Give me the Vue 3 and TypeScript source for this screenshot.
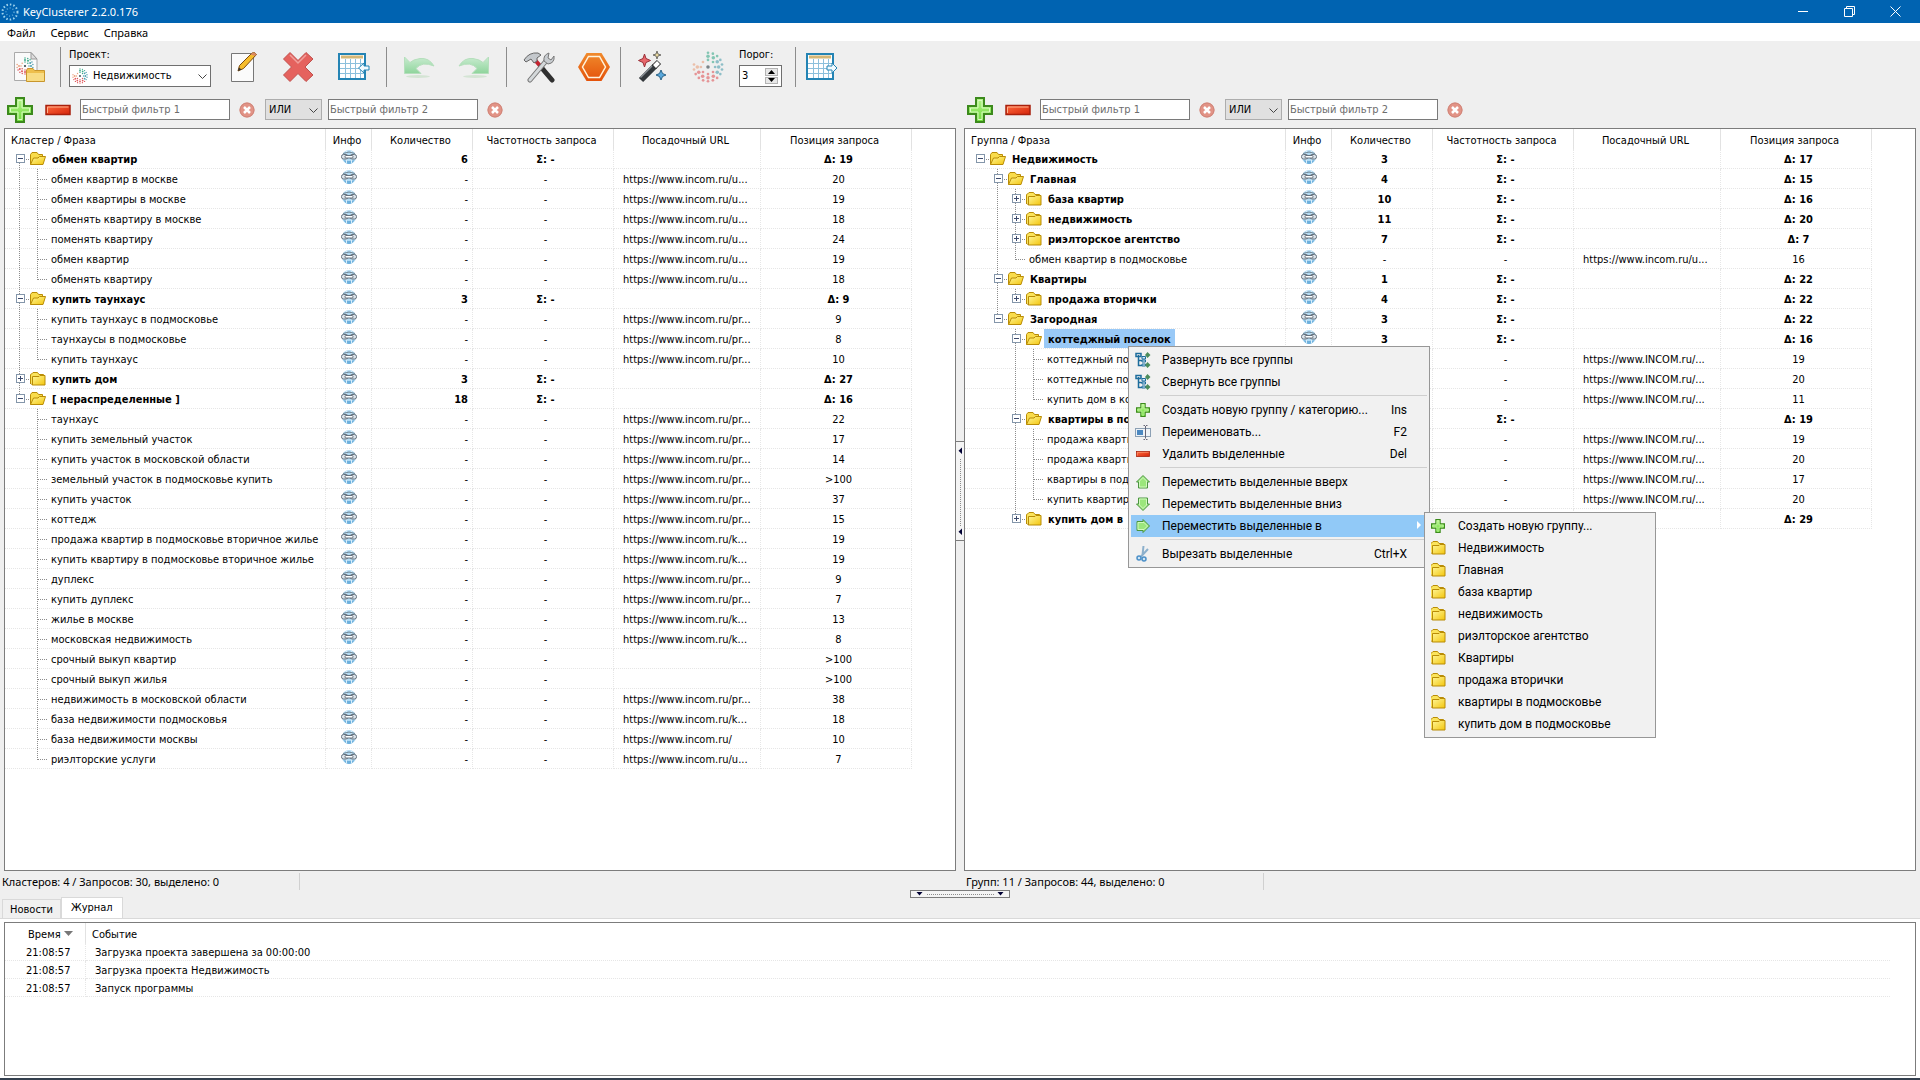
<script setup lang="ts">
import { ref } from 'vue'

interface Node {
  name: string
  count?: number
  url?: string
  pos: string
  open?: boolean
  selected?: boolean
  children?: Node[]
}

interface Row {
  node: Node
  folder: boolean
  guides: string[]
}

const U = 'https://www.incom.ru/u...'
const PR = 'https://www.incom.ru/pr...'
const K = 'https://www.incom.ru/k...'
const INC = 'https://www.INCOM.ru/...'

const leaf = (name: string, pos: string, url = ''): Node => ({ name, pos, url })
const group = (name: string, count: number, avg: number, children: Node[] | null, selected = false): Node => ({
  name, count, pos: 'Δ: ' + avg, open: children !== null, children: children ?? [], selected,
})

const clusters: Node[] = [
  group('обмен квартир', 6, 19, [
    leaf('обмен квартир в москве', '20', U),
    leaf('обмен квартиры в москве', '19', U),
    leaf('обменять квартиру в москве', '18', U),
    leaf('поменять квартиру', '24', U),
    leaf('обмен квартир', '19', U),
    leaf('обменять квартиру', '18', U),
  ]),
  group('купить таунхаус', 3, 9, [
    leaf('купить таунхаус в подмосковье', '9', PR),
    leaf('таунхаусы в подмосковье', '8', PR),
    leaf('купить таунхаус', '10', PR),
  ]),
  group('купить дом', 3, 27, null),
  group('[ нераспределенные ]', 18, 16, [
    leaf('таунхаус', '22', PR),
    leaf('купить земельный участок', '17', PR),
    leaf('купить участок в московской области', '14', PR),
    leaf('земельный участок в подмосковье купить', '>100', PR),
    leaf('купить участок', '37', PR),
    leaf('коттедж', '15', PR),
    leaf('продажа квартир в подмосковье вторичное жилье', '19', K),
    leaf('купить квартиру в подмосковье вторичное жилье', '19', K),
    leaf('дуплекс', '9', PR),
    leaf('купить дуплекс', '7', PR),
    leaf('жилье в москве', '13', K),
    leaf('московская недвижимость', '8', K),
    leaf('срочный выкуп квартир', '>100'),
    leaf('срочный выкуп жилья', '>100'),
    leaf('недвижимость в московской области', '38', PR),
    leaf('база недвижимости подмосковья', '18', K),
    leaf('база недвижимости москвы', '10', 'https://www.incom.ru/'),
    leaf('риэлторские услуги', '7', U),
  ]),
]

const groups: Node[] = [
  group('Недвижимость', 3, 17, [
    group('Главная', 4, 15, [
      group('база квартир', 10, 16, null),
      group('недвижимость', 11, 20, null),
      group('риэлторское агентство', 7, 7, null),
      leaf('обмен квартир в подмосковье', '16', U),
    ]),
    group('Квартиры', 1, 22, [group('продажа вторички', 4, 22, null)]),
    group('Загородная', 3, 22, [
      group('коттеджный поселок', 3, 16, [
        leaf('коттеджный по', '19', INC),
        leaf('коттеджные по', '20', INC),
        leaf('купить дом в ко', '11', INC),
      ], true),
      group('квартиры в по', 4, 19, [
        leaf('продажа кварти', '19', INC),
        leaf('продажа кварти', '20', INC),
        leaf('квартиры в под', '17', INC),
        leaf('купить квартир', '20', INC),
      ]),
      group('купить дом в', 3, 29, null),
    ]),
  ]),
]

// Line segments drawn in one 18px guide cell, keyed by its kind.
const segments: Record<string, string> = {
  pass: 'M8.5 0V20',
  tee: 'M8.5 0V20M9 10.5H19',
  end: 'M8.5 0V11M9 10.5H19',
  start: 'M8.5 10V20M9 10.5H19',
  only: 'M9 10.5H19',
  none: '',
}

function flatten(nodes: Node[], above: string[] = []): Row[] {
  const rows: Row[] = []
  nodes.forEach((node, i) => {
    const last = i === nodes.length - 1
    const root = above.length === 0 && i === 0
    const own = root ? (last ? 'only' : 'start') : last ? 'end' : 'tee'
    rows.push({ node, folder: node.children !== undefined, guides: [...above, own] })
    if (node.open) rows.push(...flatten(node.children ?? [], [...above, last ? 'none' : 'pass']))
  })
  return rows
}

const panels = [
  { id: 'clusters', title: 'Кластер / Фраза', rows: flatten(clusters), status: 'Кластеров: 4 / Запросов: 30, выделено: 0' },
  { id: 'groups', title: 'Группа / Фраза', rows: flatten(groups), status: 'Групп: 11 / Запросов: 44, выделено: 0' },
]

const menu = [
  [
    { icon: 'tree', text: 'Развернуть все группы', key: '' },
    { icon: 'tree', text: 'Свернуть все группы', key: '' },
  ],
  [
    { icon: 'plus', text: 'Создать новую группу / категорию...', key: 'Ins' },
    { icon: 'rename', text: 'Переименовать...', key: 'F2' },
    { icon: 'minus', text: 'Удалить выделенные', key: 'Del' },
  ],
  [
    { icon: 'up', text: 'Переместить выделенные вверх', key: '' },
    { icon: 'down', text: 'Переместить выделенные вниз', key: '' },
    { icon: 'right', text: 'Переместить выделенные в', key: '', sub: true },
  ],
  [{ icon: 'cut', text: 'Вырезать выделенные', key: 'Ctrl+X' }],
]

const targets = [
  'Недвижимость', 'Главная', 'база квартир', 'недвижимость', 'риэлторское агентство',
  'Квартиры', 'продажа вторички', 'квартиры в подмосковье', 'купить дом в подмосковье',
]

const log = [
  { time: '21:08:57', text: 'Загрузка проекта завершена за 00:00:00' },
  { time: '21:08:57', text: 'Загрузка проекта Недвижимость' },
  { time: '21:08:57', text: 'Запуск программы' },
]

const dots: { x: number; y: number; r: number; c: string }[] = [{ x: 16, y: 16, r: 2, c: '#2b3a42' }]
for (const [radius, n] of [[8, 8], [12, 12], [16, 18]]) {
  for (let i = 0; i < n; i++) {
    const a = (i / n) * 360
    if (radius > 8 && a > 285 && a < 345) continue
    const c = a < 60 || a > 340 ? '#3dab8c' : a < 130 ? '#4d9fae' : a < 250 ? '#e0595c' : '#e9a07c'
    const t = (a * Math.PI) / 180
    dots.push({ x: 16 + radius * Math.sin(t), y: 16 - radius * Math.cos(t), r: radius === 12 ? 2 : 1.5, c })
  }
}

const threshold = ref(3)
const tab = ref('log')
</script>

<template>
  <div class="app">
    <svg class="defs" aria-hidden="true">
      <defs>
        <linearGradient id="gYellow" x1="0" y1="0" x2="1" y2="1"><stop offset="0" stop-color="#fff79a" /><stop offset="1" stop-color="#f3c50c" /></linearGradient>
        <linearGradient id="gGreen" x1="0" y1="0" x2="0" y2="1"><stop offset="0" stop-color="#b5f58a" /><stop offset="1" stop-color="#6fdc3c" /></linearGradient>
        <linearGradient id="gRed" x1="0" y1="0" x2="1" y2="1"><stop offset="0" stop-color="#ff6a3c" /><stop offset="1" stop-color="#d4240a" /></linearGradient>
        <linearGradient id="gOrange" x1="0" y1="0" x2="0" y2="1"><stop offset="0" stop-color="#f08a2c" /><stop offset="1" stop-color="#e4520a" /></linearGradient>
        <linearGradient id="gUndo" x1="0" y1="0" x2="0" y2="1"><stop offset="0" stop-color="#c9ecd0" /><stop offset="1" stop-color="#8fd49c" /></linearGradient>
        <symbol id="dots" viewBox="-2 -2 36 36">
          <circle v-for="(d, i) in dots" :key="i" :cx="d.x" :cy="d.y" :r="d.r" :fill="d.c" />
        </symbol>
        <symbol id="folder" viewBox="0 0 16 16">
          <path d="M.5 13V4Q.5 3 1.5 3L3 1.5H7.5L9 3.5H13.5V5" fill="#fbe45c" stroke="#b98c06" />
          <path d="M.5 4V12.500L3 14" fill="none" stroke="#b98c06" />
          <path d="M2.500 5.500L9 5.500L10 4.500H15V14H2.500Z" fill="url(#gYellow)" stroke="#b98c06" />
        </symbol>
        <symbol id="folder-open" viewBox="0 0 16 16">
          <path d="M.5 13.500V3.500L2 1.500H7L8.500 3.500H12.500V6" fill="#f9dc4c" stroke="#b98c06" />
          <path d="M.5 13.500L3.500 7H8L9.500 5.500H15.500L13 13.500Z" fill="url(#gYellow)" stroke="#b98c06" />
        </symbol>
        <symbol id="link" viewBox="0 0 16 16">
          <circle cx="8" cy="8" r="7" fill="#b4dcf4" />
          <path d="M2.500 11Q8 13 13.500 11Q11.500 15 8 15Q4.500 15 2.500 11Z" fill="#6fb0dc" />
          <path d="M5.500 1.500V14.500M10.500 1.500V14.500" stroke="#d8eefa" />
          <path d="M2 4.500Q8 1.500 14 4.500" fill="none" stroke="#6f8494" />
          <rect x=".5" y="5.500" width="6.500" height="4.500" rx="2" fill="#dce4ea" stroke="#66727e" />
          <rect x="9" y="5.500" width="6.500" height="4.500" rx="2" fill="#dce4ea" stroke="#66727e" />
          <rect x="4" y="6.500" width="8" height="2.500" rx="1" fill="#fff" stroke="#66727e" />
        </symbol>
        <symbol id="plus" viewBox="0 0 26 26">
          <path d="M9 1H17V9H25V17H17V25H9V17H1V9H9Z" fill="url(#gGreen)" stroke="#3c8a1c" stroke-width="2" />
          <path d="M11 3.500H15V11H22.500V15H15V22.500H11V15H3.500V11H11Z" fill="none" stroke="#d8fbc0" />
        </symbol>
        <symbol id="minus" viewBox="0 0 26 26">
          <rect x="1" y="8.500" width="24" height="9" fill="url(#gRed)" stroke="#a8200c" stroke-width="1.500" />
          <path d="M2.500 16V10H23.500" fill="none" stroke="#ffb08c" />
        </symbol>
        <symbol id="clear" viewBox="0 0 16 16">
          <circle cx="8" cy="8" r="7.500" fill="#e29386" />
          <circle cx="8" cy="8" r="7" fill="none" stroke="#cf8579" />
          <path d="M5 5L11 11M11 5L5 11" stroke="#fff" stroke-width="2.500" />
        </symbol>
        <symbol id="up" viewBox="0 0 16 16">
          <path d="M8 1.500L14.500 8H12.500V14H3.500V8H1.500Z" fill="#9be67c" stroke="#4b9440" />
          <path d="M8 3.500L11.500 7V13H4.500V7Z" fill="none" stroke="#d2f8bf" />
        </symbol>
        <symbol id="sheet" viewBox="0 0 32 32">
          <rect x="1" y="3" width="26" height="25" fill="#fff" stroke="#2484b4" stroke-width="2" />
          <rect x="3" y="4.500" width="22" height="3" fill="#d4b878" />
          <path d="M2 12.500H26M2 17.500H26M2 22.500H26M7.500 8V27M12.500 8V27M17.500 8V27M22.500 8V27" stroke="#8cc0dc" />
        </symbol>
      </defs>
    </svg>

    <header class="title-bar">
      <svg class="app-icon" viewBox="0 0 18 18">
        <circle cx="9" cy="9" r="7.500" fill="none" stroke="#9fd4ee" stroke-width="2" stroke-dasharray="1.500 2" />
        <circle cx="9" cy="9" r="4" fill="none" stroke="#5aa6d8" stroke-width="1.500" stroke-dasharray="1 2" />
      </svg>
      <h1>KeyClusterer 2.2.0.176</h1>
      <div class="win-buttons">
        <button type="button" aria-label="Свернуть"><svg viewBox="0 0 11 11"><path d="M0 5.500H10" /></svg></button>
        <button type="button" aria-label="Восстановить"><svg viewBox="0 0 11 11"><path d="M.5 2.500H8.500V10.500H.5ZM2.500 2.500V.5H10.500V8.500H8.500" /></svg></button>
        <button type="button" aria-label="Закрыть"><svg viewBox="0 0 11 11"><path d="M.5 .5L10.500 10.500M10.500 .5L.5 10.500" /></svg></button>
      </div>
    </header>

    <nav class="menu-bar">
      <button type="button">Файл</button>
      <button type="button">Сервис</button>
      <button type="button">Справка</button>
    </nav>

    <div class="toolbar">
      <button class="tool" type="button" aria-label="Открыть проект">
        <svg viewBox="0 0 32 32">
          <path d="M.5 1.500H17L23 8V29.500H.5Z" fill="#fafafa" stroke="#aaa" /><path d="M17 1.500V8H23Z" fill="#ddd" stroke="#999" />
          <use href="#dots" x="2" y="6" width="18" height="18" />
          <path d="M12.500 30.500V19L14 17.500H19L20.500 19.500H30.500V30.500Z" fill="#eebf4c" stroke="#c8962c" /><path d="M13 22H30V30H13Z" fill="#f8dc84" />
        </svg>
      </button>
      <i class="sep first"></i>
      <div class="field">
        <label for="project">Проект:</label>
        <div class="combo">
          <svg class="combo-icon" viewBox="0 0 16 16"><use href="#dots" width="16" height="16" /></svg>
          <select id="project"><option>Недвижимость</option></select>
          <svg class="chevron" viewBox="0 0 9 6"><path d="M.5 .5L4.500 4.500L8.500 .5" /></svg>
        </div>
      </div>
      <div class="tools after-field">
        <button class="tool" type="button" aria-label="Редактировать">
          <svg viewBox="0 0 32 32">
            <path d="M3.500 2.500H25.500V30.500H3.500Z" fill="#fbfbfb" stroke="#777" />
            <path d="M10 20L11.500 14.500L24 2Q27 .5 28.500 3.500L15.500 17.500Z" fill="#f7bd2c" stroke="#7a4a10" />
            <path d="M24 2Q27 .5 28.500 3.500L27 5L22.500 3.500Z" fill="#d88860" /><path d="M10 20L11 16.500L13.500 18.500Z" fill="#333" />
          </svg>
        </button>
        <button class="tool" type="button" aria-label="Удалить">
          <svg viewBox="0 0 32 32"><path d="M7 1.500L15 9.500L23 1.500L30 8L22 16L30 24L23 30.500L15 22.500L7 30.500L.5 24L8.500 16L.5 8Z" fill="#e5625e" stroke="#c0504c" /><path d="M7 4L15 12L23 4" fill="none" stroke="#f0a09c" stroke-width="1.500" /></svg>
        </button>
        <button class="tool" type="button" aria-label="Импорт">
          <svg viewBox="0 0 32 32"><use href="#sheet" width="32" height="32" /><path d="M20.500 17L26 12V15H31V19H26V22Z" fill="#f2fbff" stroke="#2484b4" /></svg>
        </button>
      </div>
      <i class="sep"></i>
      <div class="tools">
        <button class="tool" type="button" aria-label="Отменить">
          <svg viewBox="0 0 32 32"><path d="M1.500 6V22.500H18L13 17.500Q19 10 31 15Q26 6.500 17 7.500Q10 8.500 7 11.500Z" fill="url(#gUndo)" stroke="#b5dfbc" /><ellipse cx="15" cy="25.500" rx="12" ry="1.500" fill="#d4e4d4" /></svg>
        </button>
        <button class="tool" type="button" aria-label="Повторить">
          <svg viewBox="0 0 32 32"><g transform="matrix(-1 0 0 1 32 0)"><path d="M1.500 6V22.500H18L13 17.500Q19 10 31 15Q26 6.500 17 7.500Q10 8.500 7 11.500Z" fill="url(#gUndo)" stroke="#b5dfbc" /></g><ellipse cx="17" cy="25.500" rx="12" ry="1.500" fill="#d4e4d4" /></svg>
        </button>
      </div>
      <i class="sep"></i>
      <div class="tools">
        <button class="tool" type="button" aria-label="Настройки">
          <svg viewBox="0 0 32 32">
            <path d="M12 9L19 17" stroke="#c42430" stroke-width="4" /><path d="M18 16L29 29" stroke="#303030" stroke-width="5" stroke-linecap="round" />
            <path d="M1 9Q6 1 15 2L18 4L14 7L14 10L11 12L8 8L3 11Z" fill="#c4c8cc" stroke="#666" />
            <path d="M7 29L23 10" stroke="#777" stroke-width="5" stroke-linecap="round" /><path d="M7 29L23 10" stroke="#d4d8da" stroke-width="3" stroke-linecap="round" />
            <path d="M21 10Q20 4 26 2L25 7L28 9L31 5Q32 12 25 13Z" fill="#c8ccd0" stroke="#777" />
          </svg>
        </button>
        <button class="tool" type="button" aria-label="Остановить">
          <svg viewBox="0 0 32 32"><path d="M8.500 2H23.500L32 16L23.500 30H8.500L0 16Z" fill="url(#gOrange)" /><path d="M10.500 5.500H21.500L27.500 16L21.500 26.500H10.500L4.500 16Z" fill="none" stroke="#fff3dc" stroke-width="1.500" /></svg>
        </button>
      </div>
      <i class="sep tight"></i>
      <div class="tools">
        <button class="tool" type="button" aria-label="Мастер">
          <svg viewBox="0 0 32 32">
            <path d="M4 29L18 15" stroke="#33383c" stroke-width="6" /><path d="M3.500 26.500L15 15" stroke="#8a9096" stroke-width="1.500" /><path d="M17 16L22 11" stroke="#333" stroke-width="6" /><path d="M17.500 15.500L21.500 11.500" stroke="#fff" stroke-width="4" />
            <path d="M7.500 3L9 7.500L13.500 9.500L9 11.500L7.500 16L6 11.500L1.500 9.500L6 7.500Z" fill="#e8686c" stroke="#9a3038" />
            <path d="M20 0L21 3L24 4L21 5L20 8L19 5L16 4L19 3Z" fill="#e8d8a0" stroke="#444" stroke-width=".7" />
            <path d="M24 19L25.500 22.500L29 24L25.500 25.500L24 29L22.500 25.500L19 24L22.500 22.500Z" fill="#5aa8dc" stroke="#2c6488" />
          </svg>
        </button>
        <button class="tool faded" type="button" aria-label="Кластеризация"><svg viewBox="0 0 32 32"><use href="#dots" width="32" height="32" /></svg></button>
      </div>
      <div class="field threshold">
        <label for="threshold">Порог:</label>
        <div class="spin">
          <input id="threshold" v-model="threshold" type="number">
          <div class="spin-buttons">
            <button type="button" aria-label="Больше" @click="threshold++"><svg viewBox="0 0 7 4"><path d="M0 4L3.500 0L7 4Z" /></svg></button>
            <button type="button" aria-label="Меньше" @click="threshold--"><svg viewBox="0 0 7 4"><path d="M0 0L3.500 4L7 0Z" /></svg></button>
          </div>
        </div>
      </div>
      <i class="sep end"></i>
      <button class="tool" type="button" aria-label="Экспорт">
        <svg viewBox="0 0 32 32"><use href="#sheet" width="32" height="32" /><path d="M21 15H26V12L31 17L26 22V19H21Z" fill="#f2fbff" stroke="#2484b4" /></svg>
      </button>
    </div>

    <main class="workspace">
      <section v-for="p in panels" :key="p.id" class="side">
        <div class="filters">
          <button type="button" class="flt-icon" aria-label="Добавить"><svg><use href="#plus" /></svg></button>
          <button type="button" class="flt-icon remove" aria-label="Удалить"><svg><use href="#minus" /></svg></button>
          <input type="text" placeholder="Быстрый фильтр 1" aria-label="Быстрый фильтр 1">
          <button type="button" class="clear" aria-label="Очистить фильтр 1"><svg><use href="#clear" /></svg></button>
          <div class="combo op">
            <select aria-label="Условие"><option>ИЛИ</option></select>
            <svg class="chevron" viewBox="0 0 9 6"><path d="M.5 .5L4.500 4.500L8.500 .5" /></svg>
          </div>
          <input type="text" placeholder="Быстрый фильтр 2" aria-label="Быстрый фильтр 2">
          <button type="button" class="clear" aria-label="Очистить фильтр 2"><svg><use href="#clear" /></svg></button>
        </div>

        <div class="pane">
          <table class="tree" :class="p.id">
            <colgroup><col class="c-name"><col class="c-info"><col class="c-count"><col class="c-freq"><col class="c-url"><col class="c-pos"></colgroup>
            <thead>
              <tr><th class="name">{{ p.title }}</th><th>Инфо</th><th>Количество</th><th>Частотность запроса</th><th>Посадочный URL</th><th>Позиция запроса</th></tr>
            </thead>
            <tbody>
              <tr v-for="(r, i) in p.rows" :key="i" :class="{ group: r.folder }">
                <td class="name">
                  <div class="line">
                    <svg v-for="(g, j) in r.guides" :key="j" class="guide" viewBox="0 0 18 19">
                      <path class="dotted" :d="segments[g]" />
                      <template v-if="r.folder && j === r.guides.length - 1">
                        <rect x="5.500" y="5.500" width="8" height="8" fill="#fff" stroke="#8496aa" />
                        <path :d="r.node.open ? 'M7 9.500H12' : 'M7 9.500H12M9.500 7V12'" stroke="#3c4a6c" />
                      </template>
                    </svg>
                    <svg v-if="r.folder" class="folder"><use :href="r.node.open ? '#folder-open' : '#folder'" /></svg>
                    <span :class="{ selected: r.node.selected }">{{ r.node.name }}</span>
                  </div>
                </td>
                <td class="info"><svg><use href="#link" /></svg></td>
                <td class="count">{{ r.folder ? r.node.count : '-' }}</td>
                <td>{{ r.folder ? 'Σ: -' : '-' }}</td>
                <td class="url">{{ r.node.url }}</td>
                <td>{{ r.node.pos }}</td>
              </tr>
            </tbody>
          </table>

          <template v-if="p.id === 'groups'">
            <div class="popup context" role="menu">
              <div v-for="(part, i) in menu" :key="i" class="part">
                <button v-for="m in part" :key="m.text" type="button" role="menuitem" :class="{ active: 'sub' in m }">
                  <svg v-if="m.icon === 'plus' || m.icon === 'minus'" viewBox="0 0 16 16"><use :href="'#' + m.icon" x="1" y="1" width="14" height="14" /></svg>
                  <svg v-else-if="m.icon === 'up'" viewBox="0 0 16 16"><use href="#up" /></svg>
                  <svg v-else-if="m.icon === 'down'" viewBox="0 0 16 16"><use href="#up" transform="rotate(180 8 8)" /></svg>
                  <svg v-else-if="m.icon === 'right'" viewBox="0 0 16 16"><use href="#up" transform="rotate(90 8 8)" /></svg>
                  <svg v-else-if="m.icon === 'tree'" viewBox="0 0 16 16">
                    <path d="M3.500 3V13.500H7M3.500 8.500H7M1 1.500H6V4.500H1Z" fill="none" stroke="#1c6c9c" stroke-width="1.500" /><path d="M7 4.500H10.500V7H7ZM7 8H10.500V10H7ZM7 12H10.500V14H7Z" fill="#cfe8f8" stroke="#1c6c9c" />
                    <path d="M12.500 0L15.500 3L12.500 6L10 3ZM12.500 10L15.500 13L12.500 16L10 13Z" fill="#4c8c5c" />
                  </svg>
                  <svg v-else-if="m.icon === 'rename'" viewBox="0 0 16 16">
                    <rect x=".5" y="4.500" width="15" height="8" fill="#eef2f6" stroke="#8ca0b4" /><rect x="2" y="6" width="6" height="5" fill="#4c88c0" /><path d="M10.500 2V14.500M8.500 1.500H10M11 1.500H12.500M8.500 15.500H10M11 15.500H12.500" stroke="#667" />
                  </svg>
                  <svg v-else viewBox="0 0 16 16">
                    <path d="M8.500 0L7.500 9M13 3L6 10.500" stroke="#8cb0cc" stroke-width="2" /><circle cx="4" cy="12" r="2" fill="#cfe4f4" stroke="#4c90c8" stroke-width="1.500" /><circle cx="9" cy="13" r="2" fill="#cfe4f4" stroke="#4c90c8" stroke-width="1.500" />
                  </svg>
                  <span>{{ m.text }}</span>
                  <kbd v-if="m.key">{{ m.key }}</kbd>
                  <svg v-if="'sub' in m" class="arrow" viewBox="0 0 4 8"><path d="M0 0L4 4L0 8Z" fill="#fff" /></svg>
                </button>
              </div>
            </div>
            <div class="popup submenu" role="menu">
              <button type="button" role="menuitem"><svg viewBox="0 0 16 16"><use href="#plus" x="0" y="1" width="14" height="14" /></svg><span>Создать новую группу...</span></button>
              <button v-for="t in targets" :key="t" type="button" role="menuitem"><svg viewBox="1 0 16 16"><use href="#folder" width="16" height="16" /></svg><span>{{ t }}</span></button>
            </div>
          </template>
        </div>
        <footer class="status"><span>{{ p.status }}</span></footer>
      </section>
      <div class="grip vertical">
        <svg viewBox="0 0 8 98"><path d="M6 5.500V12L2.500 8.800ZM6 86.500V93L2.500 89.800Z" fill="#003" /><path class="dotted" d="M4.500 17V84" /></svg>
      </div>
      <div class="grip horizontal">
        <svg viewBox="0 0 98 6"><path d="M5.500 1H11.500L8.500 4.500ZM86.500 1H92.500L89.500 4.500Z" fill="#003" /><path class="dotted" d="M16 3.500H84" /></svg>
      </div>
    </main>

    <section class="journal">
      <div class="tabs" role="tablist">
        <button type="button" role="tab" :class="{ current: tab === 'news' }" @click="tab = 'news'">Новости</button>
        <button type="button" role="tab" :class="{ current: tab === 'log' }" @click="tab = 'log'">Журнал</button>
      </div>
      <div class="sheet">
        <div class="log-box">
          <table class="log">
            <colgroup><col class="c-time"><col></colgroup>
            <thead><tr><th class="time">Время <svg viewBox="0 0 9 5"><path d="M0 0H9L4.500 5Z" fill="#777" /></svg></th><th>Событие</th></tr></thead>
            <tbody><tr v-for="(l, i) in log" :key="i"><td>{{ l.time }}</td><td>{{ l.text }}</td></tr></tbody>
          </table>
        </div>
      </div>
    </section>
  </div>
</template>

<style>
body {
  margin: 0;
  background: #efefef;
}
</style>

<style scoped>
.app {
  --ui: 'Noto Sans', 'Open Sans', sans-serif;
  --grid: 'DejaVu Sans Condensed', 'DejaVu Sans', sans-serif;
  display: flex;
  flex-direction: column;
  min-height: 100vh;
  box-sizing: border-box;
  border-bottom: 2px solid #34404e;
  background: #efefef;
  color: #000;
  font: 11px/16px var(--grid);
}
.app *, .app *::before { box-sizing: border-box; }
.defs { position: absolute; width: 0; height: 0; }
button, input, select { margin: 0; padding: 0; border: 0; background: none; color: inherit; font: inherit; }
svg { display: block; flex: none; }
.dotted { fill: none; stroke: #8c8c8c; stroke-dasharray: 1 1; }

.title-bar { display: flex; align-items: center; height: 23px; padding-left: 1px; background: #0063b1; color: #fff; }
.app-icon { width: 18px; height: 18px; margin-right: 4px; }
h1 { margin: 0; font: 11px/16px var(--ui); }
.win-buttons { display: flex; margin-left: auto; padding-right: 2px; }
.win-buttons button { display: grid; place-items: center; width: 46px; height: 21px; }
.win-buttons svg { width: 11px; height: 11px; fill: none; stroke: #fff; }

.menu-bar { display: flex; gap: 15px; height: 18px; padding: 2px 7px 0; background: #fff; font: 11px/16px var(--ui); }

.toolbar { display: flex; align-items: center; height: 51px; padding-left: 14px; }
.tool { width: 32px; height: 32px; }
.tool svg { width: 32px; height: 32px; }
.faded { opacity: .6; }
.tools { display: flex; gap: 23px; }
.after-field { margin-left: 17px; }
.sep { width: 1px; height: 40px; margin: 0 16px; background: #8c8c8c; }
.sep.first { margin: 0 8px 0 14px; }
.sep.tight { margin-left: 10px; }
.sep.end { margin: 0 10px 0 13px; }
.field { display: flex; flex-direction: column; gap: 2px; padding-top: 1px; }
.field label { line-height: 16px; }
.threshold { margin-left: 15px; }
.combo { position: relative; }
.combo select { appearance: none; width: 142px; height: 22px; padding-left: 23px; border: 1px solid #6f6f6f; background: #fff; }
.combo-icon { position: absolute; left: 3px; top: 3px; width: 16px; height: 16px; }
.chevron { position: absolute; right: 4px; top: 9px; width: 9px; height: 6px; fill: none; stroke: #444; pointer-events: none; }
.spin { display: flex; width: 43px; height: 22px; border: 1px solid #6f6f6f; background: #fff; }
.spin input { flex: 1; min-width: 0; padding-left: 2px; appearance: textfield; }
.spin input::-webkit-inner-spin-button { appearance: none; margin: 0; }
.spin-buttons { display: flex; flex-direction: column; gap: 1px; padding: 2px 3px; }
.spin-buttons button { display: grid; place-items: center; width: 13px; flex: 1; border: 1px solid #b4b4b4; background: #e8e8e8; }
.spin-buttons svg { width: 7px; height: 4px; }

.workspace { position: relative; display: flex; flex: 1; }
.side { display: flex; flex-direction: column; flex: 1; min-width: 0; }
.filters { display: flex; align-items: center; height: 36px; padding: 0 0 1px 7px; }
.flt-icon, .flt-icon svg { width: 26px; height: 26px; }
.remove { margin: 0 9px 0 12px; }
.filters input { width: 150px; height: 21px; padding-left: 1px; border: 1px solid #7a7a7a; background: #fff; }
.filters input::placeholder { color: #6d6d6d; opacity: 1; }
.clear, .clear svg { width: 16px; height: 16px; }
.clear { margin: 0 9px; }
.op { margin: 0 6px 0 1px; }
.combo.op select { width: 57px; height: 21px; padding-left: 3px; border-color: #adadad; background: #e0e0e0; }

.pane { position: relative; flex: 1; margin: 0 4px; border: 1px solid #7c7c7c; background: #fff; }
.tree, .log { table-layout: fixed; border-spacing: 0; }
.tree { width: 907px; }
.c-name { width: 321px; }
.c-info { width: 46px; }
.c-count { width: 101px; }
.c-freq { width: 141px; }
.c-url { width: 147px; }
.c-pos { width: 151px; }
th { height: 20px; padding: 4px 3px 0 0; border-right: 1px solid #e2e2e2; font-weight: 400; line-height: 16px; white-space: nowrap; }
.tree th.name { padding-left: 6px; text-align: left; }
.tree td { height: 20px; padding: 2px 0 0 5px; border-right: 1px dotted #e6e6e6; border-bottom: 1px dotted #e6e6e6; text-align: center; white-space: nowrap; }
.tree td.name { padding: 0 0 0 6px; text-align: left; }
.tree td.url { padding-left: 9px; text-align: left; }
.tree td.info { padding: 0; }
.info svg { width: 16px; height: 16px; margin: 0 auto 3px; }
.clusters td.count { padding-right: 4px; text-align: right; }
.group { font-weight: 700; }
.line { display: flex; align-items: center; height: 19px; }
.guide { width: 18px; height: 19px; overflow: visible; }
.folder { width: 16px; height: 16px; margin: 0 1px; }
.line span { height: 19px; margin-left: 1px; padding: 0 4px; line-height: 21px; }
.guide + span { margin-left: 0; }
.selected { background: #99c9f7; }

.status { display: flex; height: 19px; padding: 2px 0 0 2px; font: 11px/18px var(--ui); }
.status span { width: 298px; border-right: 1px solid #d0d0d0; }
.side + .side .status { padding-left: 6px; }

.grip { position: absolute; border: 1px solid #7c7c7c; background: #f4f4f4; }
.grip.vertical { left: calc(50% - 5px); top: 349px; width: 10px; height: 100px; }
.grip.vertical svg { width: 8px; height: 98px; }
.grip.horizontal { left: calc(50% - 50px); bottom: -8px; width: 100px; height: 8px; }
.grip.horizontal svg { width: 98px; height: 6px; }

.popup { position: absolute; padding: 2px; border: 1px solid #979797; background: #f1f1f1; font: 12px/22px Roboto, sans-serif; }
.context { left: 163px; top: 217px; width: 302px; }
.submenu { left: 459px; top: 383px; width: 232px; }
.popup button { display: flex; align-items: center; width: 100%; height: 22px; padding: 0 20px 0 4px; text-align: left; }
.popup button.active { padding-right: 6px; background: #91c9f7; }
.popup svg { width: 16px; height: 16px; margin-right: 11px; }
.popup svg.arrow { width: 4px; height: 8px; margin: 0 0 2px auto; }
.popup kbd { margin-left: auto; font: inherit; }
.part + .part::before { content: ''; display: block; height: 1px; margin: 2px 0 3px 29px; background: #cfcfcf; }

.journal { display: flex; flex-direction: column; margin-top: 7px; }
.tabs { display: flex; align-items: flex-end; height: 21px; padding-left: 2px; }
.tabs button { height: 19px; padding: 2px 7px 0; border: 1px solid #d9d9d9; border-bottom: 0; background: #f0f0f0; line-height: 16px; }
.tabs button.current { height: 21px; padding: 0 9px; background: #fff; }
.sheet { padding: 3px 4px 2px; border-top: 1px solid #d9d9d9; background: #fff; }
.log-box { height: 154px; border: 1px solid #7c7c7c; background: #fff; }
.log { width: calc(100% - 25px); }
.c-time { width: 81px; }
.log th { text-align: left; padding-left: 6px; }
.log th.time { padding-left: 23px; }
.log th + th { border-right: 0; }
.log th svg { display: inline-block; width: 9px; height: 5px; margin: 0 0 2px 0; }
.log td { height: 18px; padding: 3px 0 0 9px; border-bottom: 1px dotted #e6e6e6; line-height: 14px; }
.log td:first-child { padding-left: 21px; border-right: 1px dotted #e6e6e6; }
</style>
